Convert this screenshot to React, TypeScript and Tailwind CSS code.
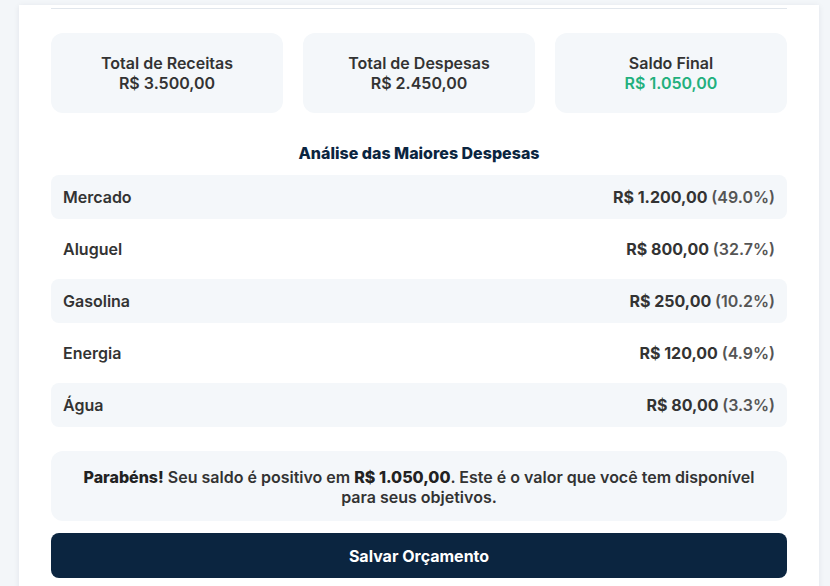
const expenses = [
  { name: "Mercado", value: "R$ 1.200,00", pct: "49.0%" },
  { name: "Aluguel", value: "R$ 800,00", pct: "32.7%" },
  { name: "Gasolina", value: "R$ 250,00", pct: "10.2%" },
  { name: "Energia", value: "R$ 120,00", pct: "4.9%" },
  { name: "Água", value: "R$ 80,00", pct: "3.3%" },
];

const totals = [
  { label: "Total de Receitas", value: "R$ 3.500,00", color: "text-[#333333]" },
  { label: "Total de Despesas", value: "R$ 2.450,00", color: "text-[#333333]" },
  { label: "Saldo Final", value: "R$ 1.050,00", color: "text-[#22b07d]" },
];

export default function App() {
  return (
    <div
      className="min-h-[586px] bg-[#f3f6f9] pt-[5px]"
      style={{ fontFamily: "Inter, 'Noto Sans', sans-serif" }}
    >
      <div className="ml-[19px] w-[800px] bg-white px-8 pt-[3px] pb-8 shadow-[0_1px_6px_rgba(15,30,60,0.08)]">
        <div className="border-b border-[#e1e6ec]" />

        <div className="mt-6 grid grid-cols-3 gap-5">
          {totals.map((t) => (
            <div
              key={t.label}
              className="flex h-20 flex-col items-center justify-center rounded-xl bg-[#f4f7fa] text-base leading-5 font-semibold"
            >
              <span className="text-[#333333]">{t.label}</span>
              <span className={t.color}>{t.value}</span>
            </div>
          ))}
        </div>

        <h3 className="mt-7 text-center text-base leading-6 font-extrabold text-[#0b2540]">
          Análise das Maiores Despesas
        </h3>

        <div className="mt-2.5 flex flex-col gap-2">
          {expenses.map((e, i) => (
            <div
              key={e.name}
              className={`flex h-11 items-center justify-between rounded-lg px-3 text-base leading-5 ${
                i % 2 === 0 ? "bg-[#f4f7fa]" : "bg-white"
              }`}
            >
              <span className="font-semibold text-[#333333]">{e.name}</span>
              <span className="font-bold text-[#333333]">
                {e.value} <span className="font-semibold text-[#555555]">({e.pct})</span>
              </span>
            </div>
          ))}
        </div>

        <div className="mt-6 rounded-xl bg-[#f4f7fa] px-4 pt-4 pb-[14px] text-center text-base leading-5 font-semibold text-[#333333]">
          <strong className="font-extrabold text-[#222222]">Parabéns!</strong> Seu saldo é positivo em{" "}
          <strong className="font-extrabold text-[#222222]">R$ 1.050,00</strong>. Este é o valor que você tem
          disponível para seus objetivos.
        </div>

        <button
          type="button"
          className="mt-3 flex h-[45px] w-full items-center justify-center rounded-lg bg-[#0b2540] text-base font-bold text-white"
        >
          Salvar Orçamento
        </button>
      </div>
    </div>
  );
}
